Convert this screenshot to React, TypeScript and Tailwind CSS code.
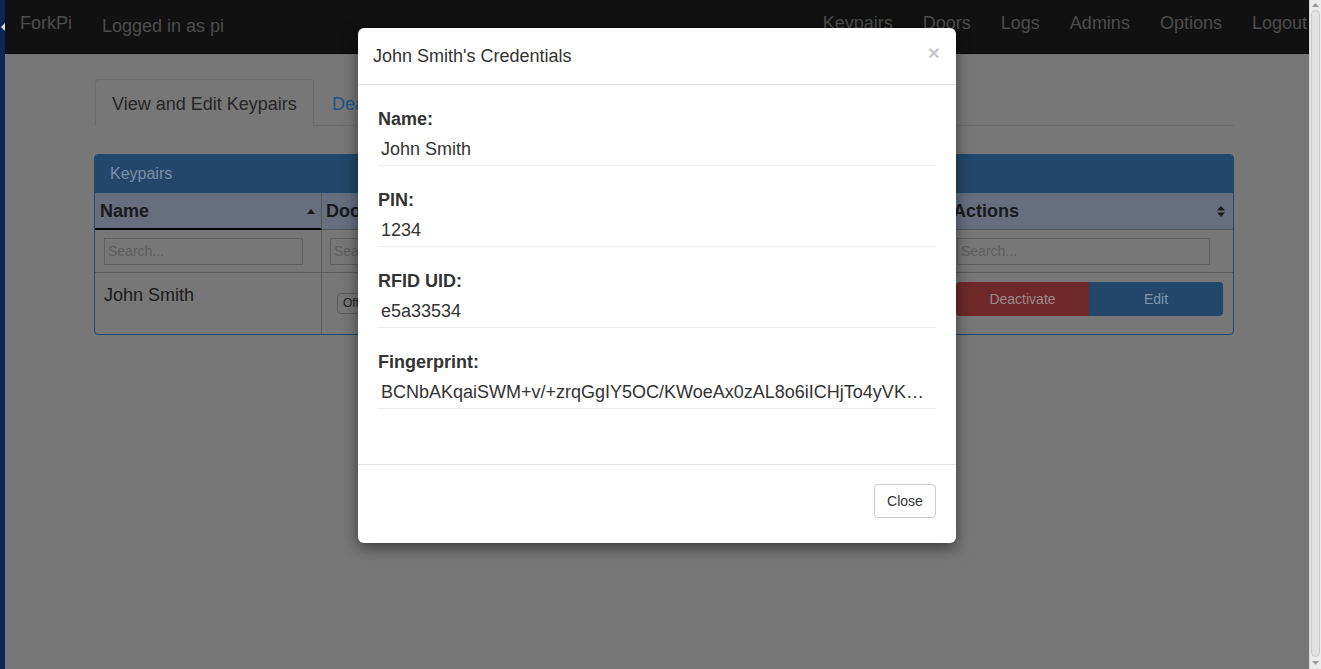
import React from "react";

const navLinks = ["Keypairs", "Doors", "Logs", "Admins", "Options", "Logout"];

const fields = [
  { label: "Name:", value: "John Smith" },
  { label: "PIN:", value: "1234" },
  { label: "RFID UID:", value: "e5a33534" },
  {
    label: "Fingerprint:",
    value:
      "BCNbAKqaiSWM+v/+zrqGgIY5OC/KWoeAx0zAL8o6iICHjTo4yVKxq3Pq0F1mZ9sT2wLbE8hR4uYc7NnGdV5oXe",
  },
];

const SortUp = () => (
  <svg width="8" height="5" viewBox="0 0 8 5">
    <path d="M0 5 L4 0 L8 5 Z" fill="#1a1a1a" />
  </svg>
);

const SortBoth = () => (
  <svg width="8" height="11" viewBox="0 0 8 11">
    <path d="M0 4.5 L4 0 L8 4.5 Z M0 6.5 L4 11 L8 6.5 Z" fill="#1a1a1a" />
  </svg>
);

const Modal = () => (
  <div className="absolute left-[358px] top-[28px] w-[598px] rounded-[6px] bg-white text-[#333] shadow-[0_5px_15px_rgba(0,0,0,0.5)]">
    <div className="flex items-center justify-between border-b border-[#e5e5e5] px-[15px] py-[15px]">
      <h4 className="pt-px text-[18px] leading-[25px]">John Smith's Credentials</h4>
      <span className="-mt-[8px] mr-[1px] text-[21px] font-bold leading-none text-[#c8c8c8]">
        ×
      </span>
    </div>
    <div className="px-[20px] pb-[35px] pt-[20px]">
      {fields.map((f) => (
        <div className="mb-[20px]" key={f.label}>
          <div className="text-[18px] font-bold leading-[28px]">{f.label}</div>
          <div className="truncate border-b border-[#eee] pb-[1px] pl-[3px] pr-[10px] pt-[1px] text-[18px] leading-[30px]">
            {f.value}
          </div>
        </div>
      ))}
    </div>
    <div className="flex justify-end border-t border-[#e5e5e5] px-[20px] pb-[25px] pt-[19px]">
      <button className="h-[34px] w-[62px] rounded-[4px] border border-[#ccc] bg-white text-[14px] text-[#333]">
        Close
      </button>
    </div>
  </div>
);

const App = () => {
  return (
    <div className="relative flex h-[669px] w-[1321px] overflow-hidden bg-[#777] font-['Liberation_Sans',Arial,sans-serif]">
      <div className="relative w-[5px] shrink-0 bg-[#0b2557]">
        <svg className="absolute left-[1px] top-[23px]" width="4" height="8" viewBox="0 0 4 8">
          <path d="M4 0 L0 4 L4 8 Z" fill="#d8dde6" />
        </svg>
      </div>

      <main className="flex-1">
        <nav className="flex h-[54px] justify-between border-b border-[#0a0a0a] bg-[#111] text-[18px] text-[#4d4d4d]">
          <div className="flex">
            <span className="pl-[15px] pt-[13px] leading-[20px]">ForkPi</span>
            <span className="pl-[30px] pt-[16px] leading-[20px]">Logged in as pi</span>
          </div>
          <ul className="flex gap-[30px] pr-[2px] pt-[13px] leading-[20px]">
            {navLinks.map((l) => (
              <li key={l}>{l}</li>
            ))}
          </ul>
        </nav>

        <div className="ml-[89px] w-[1140px]">
          <ul className="mt-[25px] flex border-b border-[#6c6c6c]">
            <li className="-mb-px ml-px flex h-[47px] w-[219px] items-center rounded-t-[4px] border border-b-transparent border-[#6c6c6c] bg-[#777] pl-[16px] pt-[4px] text-[18px] text-[#262626]">
              View and Edit Keypairs
            </li>
            <li className="flex h-[46px] items-center pl-[18px] pt-[4px] text-[18px] text-[#1c5687]">
              Deactivated Keypairs
            </li>
          </ul>

          <section className="mt-[28px] overflow-hidden rounded-[4px] border border-[#22476b]">
            <div className="h-[38px] bg-[#22476b] px-[15px] text-[16px] leading-[38px] text-[#7d90a6]">
              Keypairs
            </div>
            <div className="grid grid-cols-[227px_1fr_279px] text-[#1a1a1a]">
              <div className="flex h-[37px] items-center justify-between border-b-2 border-r border-b-black border-r-[#555] bg-[#666e80] pl-[5px] pr-[6px] pt-px text-[18px] font-bold">
                Name
                <SortUp />
              </div>
              <div className="flex h-[37px] items-center border-b border-[#555] bg-[#666e80] pl-[4px] pt-px text-[18px] font-bold">
                Doors
              </div>
              <div className="flex h-[37px] items-center justify-between border-b border-l border-[#555] bg-[#666e80] pr-[8px] pt-px text-[18px] font-bold">
                <span className="-ml-[2px]">Actions</span>
                <SortBoth />
              </div>

              <div className="flex h-[43px] items-center border-b border-r border-[#5a5a5a] pl-[9px]">
                <div className="h-[27px] w-[199px] border border-[#5f5f5f] px-[3px] text-[14px] leading-[25px] text-[#5e5e5e]">
                  Search...
                </div>
              </div>
              <div className="flex h-[43px] items-center border-b border-[#5a5a5a] pl-[8px]">
                <div className="h-[27px] w-[199px] border border-[#5f5f5f] px-[3px] text-[14px] leading-[25px] text-[#5e5e5e]">
                  Search...
                </div>
              </div>
              <div className="flex h-[43px] items-center border-b border-l border-[#5a5a5a] pl-[2px]">
                <div className="h-[27px] w-[253px] border border-[#5f5f5f] px-[3px] text-[14px] leading-[25px] text-[#5e5e5e]">
                  Search...
                </div>
              </div>

              <div className="h-[61px] border-r border-[#5a5a5a] pl-[9px] pt-[10px] text-[18px] leading-[24px]">
                John Smith
              </div>
              <div className="h-[61px] pl-[15px] pt-[17px]">
                <span className="inline-block h-[21px] rounded-[4px] border border-[#5a5a5a] px-[5px] text-[12px] leading-[19px]">
                  Off
                </span>
              </div>
              <div className="flex h-[61px] border-l border-[#5a5a5a] pl-[1px] pt-[9px]">
                <div className="flex h-[34px] w-[267px] overflow-hidden rounded-[4px] text-[14px]">
                  <span className="flex w-[133px] items-center justify-center bg-[#6f2828] text-[#9b8c8c]">
                    Deactivate
                  </span>
                  <span className="flex flex-1 items-center justify-center bg-[#22476b] text-[#8195ab]">
                    Edit
                  </span>
                </div>
              </div>
            </div>
          </section>
        </div>
      </main>

      <div className="relative w-[12px] shrink-0 border-l border-[#d4d4d4] bg-[#ececec]">
        <svg className="absolute left-[2px] top-[3px]" width="7" height="4" viewBox="0 0 7 4">
          <path d="M0 4 L3.5 0 L7 4 Z" fill="#9a9a9a" />
        </svg>
        <div className="absolute left-[1px] right-[1px] top-[10px] bottom-[12px] rounded-full border border-[#c8c8c8] bg-[#e2e2e2]" />
        <svg className="absolute bottom-[4px] left-[2px]" width="7" height="4" viewBox="0 0 7 4">
          <path d="M0 0 L3.5 4 L7 0 Z" fill="#9a9a9a" />
        </svg>
      </div>

      <Modal />
    </div>
  );
};

export default App;
